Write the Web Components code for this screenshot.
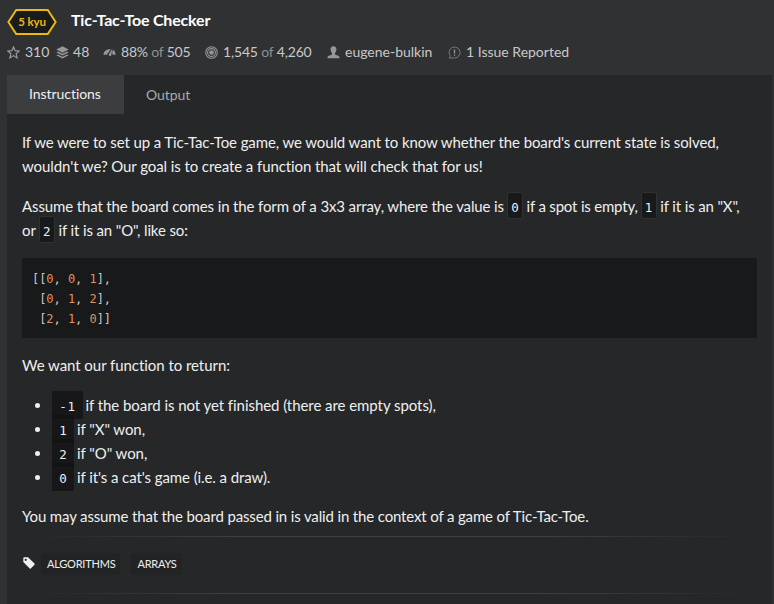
<!DOCTYPE html>
<html lang="en">
<head>
<meta charset="utf-8">
<title>Tic-Tac-Toe Checker</title>
<style>
html,body{margin:0;height:100%;background:#303133;overflow:hidden}
body{font-family:Lato,"Liberation Sans",sans-serif;color:#efefef;font-variant-ligatures:none}
</style>
</head>
<body>
<kata-page></kata-page>
<script>
const define = (name, html) => {
  const t = document.createElement('template');
  t.innerHTML = html;
  customElements.define(name, class extends HTMLElement {
    constructor() {
      super();
      this.attachShadow({mode: 'open'}).appendChild(t.content.cloneNode(true));
    }
  });
};

define('rank-badge', `<style>
:host{display:grid;width:50px;height:27px;font-size:11.5px;font-weight:700;color:#ecb613;letter-spacing:-.1px}
svg,span{grid-area:1/1}
span{place-self:center;line-height:27px}
</style>
<svg width="50" height="27" viewBox="0 0 50 27"><path d="M9.2 2H40.8L48.6 14 40.8 26H9.2L1.4 14Z" fill="#1a1c1b" stroke="#ecb613" stroke-width="2"/></svg><span><slot></slot></span>`);

define('kata-stat', `<style>
:host{display:flex;align-items:center;height:20px;font-size:14px;line-height:20px;color:#c8c8c8;white-space:pre}
::slotted(svg){flex:none;display:block;margin-right:5px}
::slotted(i){font-style:normal;color:#8f9091}
</style><slot name="icon"></slot><span><slot></slot></span>`);

define('kata-header', `<style>
:host{display:block;height:75px;box-sizing:border-box;padding:8px 0 0 7px}
.title{display:flex;height:27px}
h1{margin:0 0 0 14px;font-size:16px;line-height:24px;font-weight:700;color:#fff;letter-spacing:-.18px}
.stats{display:flex;margin-top:7px}
</style>
<div class="title"><rank-badge>5 kyu</rank-badge><h1>Tic-Tac-Toe Checker</h1></div>
<div class="stats">
<kata-stat style="width:49px"><svg slot="icon" width="13" height="13" viewBox="0 0 13 13"><path d="M6.5 .9L8.1 4.7 12.2 5 9.1 7.7 10.1 11.9 6.5 9.6 2.9 11.9 3.9 7.7 .8 5 4.9 4.7Z" fill="none" stroke="#999a9b" stroke-width="1.2"/></svg>310</kata-stat>
<kata-stat style="width:47px;letter-spacing:.1px"><svg slot="icon" style="margin-right:4px" width="13" height="13" viewBox="0 0 13 13" fill="#96979a"><path d="M6.5 .3L12.7 3.5 6.5 6.7 .3 3.5ZM1.9 5.5L6.5 7.8 11.1 5.5 12.7 6.4 6.5 9.5 .3 6.4ZM1.9 8.4L6.5 10.7 11.1 8.4 12.7 9.3 6.5 12.5 .3 9.3Z"/></svg>48</kata-stat>
<kata-stat style="width:102px;letter-spacing:-.2px"><svg slot="icon" width="13" height="13" viewBox="0 0 13 13" fill="#96979a"><path d="M.4 8.7Q1 3.2 7.6 3.1L6 6Q4.6 6.6 4.1 8.7ZM10.2 3.8Q12.4 5.1 12.7 8.7H9.7Q9.6 7.4 9 6.5Z"/><path d="M9.4 2.4L8.4 8.6A1.3 1.3 0 1 1 6.2 7.8Z"/></svg>88% <i>of</i> 505</kata-stat>
<kata-stat style="width:122px;letter-spacing:-.17px"><svg slot="icon" width="13" height="13" viewBox="0 0 13 13" fill="none" stroke="#96979a" stroke-width="1.1"><circle cx="6.5" cy="6.5" r="5.8"/><circle cx="6.5" cy="6.5" r="3.9"/><circle cx="6.5" cy="6.5" r="1.8" fill="#96979a"/></svg>1,545 <i>of</i> 4,260</kata-stat>
<kata-stat style="width:121px"><svg slot="icon" width="13" height="13" viewBox="0 0 13 13"><path d="M6.5 .3C8.6.3 9.6 1.7 9.4 3.8 9.3 5.3 8.6 6.5 8 7.1V8.6L11.7 10Q12.5 10.4 12.6 12.3H.4Q.5 10.4 1.3 10L5 8.6V7.1C4.4 6.5 3.7 5.3 3.6 3.8 3.4 1.7 4.4.3 6.5.3Z" fill="#96979a"/></svg>eugene-bulkin</kata-stat>
<kata-stat><svg slot="icon" width="13" height="13" viewBox="0 0 13 13"><path d="M1 12H6.5A5.5 5.5 0 1 0 2.4 10.1L1 12Z" fill="none" stroke="#7f8082" stroke-width=".9"/><path d="M6.5 3.5V7.4M6.5 8.4V9.8" stroke="#96979a" stroke-width="1.3"/></svg>1 Issue Reported</kata-stat>
</div>`);

define('kata-tab', `<style>
:host{display:block;box-sizing:border-box;height:39px;padding:1px 22px 0;font-size:14px;line-height:38px;color:#a9aaab;letter-spacing:-.05px}
:host([active]){width:117px;background:#3c3d3f;color:#efefef;padding-top:0}
</style><slot></slot>`);

define('code-chip', `<style>
:host{display:inline-block;box-sizing:border-box;width:16px;height:27px;margin:-2px 0 -1px -.7px;border:1px solid #303133;border-radius:3px;background:#18191a;font:12.5px/29px "DejaVu Sans Mono",monospace;letter-spacing:0;text-align:center;vertical-align:top}
:host([flat]){width:22px;height:28px;margin:-2px -.7px -2px 0;border:0;border-radius:0;line-height:31px;background:rgba(15,15,17,.65)}
:host([flat][wide]){width:31px;letter-spacing:.6px;margin-right:-1.3px}
</style><slot></slot>`);

define('code-block', `<style>
:host{display:block;box-sizing:border-box;height:80px;padding:11px 10px;background:#18191a;color:#c5c8c6}
div{font:12px/20px "DejaVu Sans Mono",monospace;letter-spacing:-.05px;white-space:pre}
b{font-weight:400;color:#de935f}
</style><div>[[<b>0</b>, <b>0</b>, <b>1</b>],</div><div> [<b>0</b>, <b>1</b>, <b>2</b>],</div><div> [<b>2</b>, <b>1</b>, <b>0</b>]]</div>`);

define('kata-description', `<style>
:host{display:block;padding:16px 15px 0;font-size:15px;line-height:24px}
p{margin:0 0 16px;white-space:nowrap}
li{height:24px;white-space:nowrap}
code-block{margin-bottom:15px}
ul{margin:0 0 15px;padding-left:30px}
</style>
<p><span style="letter-spacing:-.112px">If we were to set up a Tic-Tac-Toe game, we would want to know whether the board's current state is solved,</span><br><span style="letter-spacing:-.09px">wouldn't we? Our goal is to create a function that will check that for us!</span></p>
<p><span style="letter-spacing:-.13px">Assume that the board comes in the form of a 3x3 array, where the value is </span><code-chip>0</code-chip><span style="letter-spacing:-.19px"> if a spot is empty, </span><code-chip>1</code-chip><span style="letter-spacing:-.14px"> if it is an "X",</span><br>or <code-chip>2</code-chip><span style="letter-spacing:-.13px"> if it is an "O", like so:</span></p>
<code-block></code-block>
<p style="letter-spacing:-.05px">We want our function to return:</p>
<ul><li style="letter-spacing:-.06px"><code-chip flat wide>-1</code-chip> if the board is not yet finished (there are empty spots),</li><li style="letter-spacing:-.08px"><code-chip flat>1</code-chip> if "X" won,</li><li style="letter-spacing:-.08px"><code-chip flat>2</code-chip> if "O" won,</li><li style="letter-spacing:-.09px"><code-chip flat>0</code-chip> if it's a cat's game (i.e. a draw).</li></ul>
<p style="margin:0;letter-spacing:-.145px">You may assume that the board passed in is valid in the context of a game of Tic-Tac-Toe.</p>`);

define('fade-rule', `<style>:host{display:block;height:1px;background:linear-gradient(90deg,transparent 1%,#3f4042 30%,#3f4042 70%,transparent 99%)}</style>`);

define('tag-chip', `<style>
:host{display:block;box-sizing:border-box;height:22px;padding:0 5px 0 6px;border-radius:3px;background:#222324;font-size:11px;line-height:22px;letter-spacing:-.22px}
</style><slot></slot>`);

define('tag-list', `<style>
:host{display:flex;align-items:center;height:22px}
svg{margin:-2px 6px 0 1px}
tag-chip+tag-chip{margin-left:11px}
</style><svg width="12" height="12" viewBox="0 0 12 12"><path fill-rule="evenodd" d="M.3 1.2Q.3.3 1.2.3H5L11.5 6.6Q12 7.1 11.5 7.7L7.8 11.4Q7.2 11.9 6.7 11.4L.3 5ZM2.7 1.7A1.1 1.1 0 1 0 2.7 3.9 1.1 1.1 0 1 0 2.7 1.7Z" fill="#efefef"/></svg><tag-chip>ALGORITHMS</tag-chip><tag-chip>ARRAYS</tag-chip>`);

define('kata-page', `<style>
:host{display:block;height:604px;background:#303133}
main{height:529px;margin:0 2px 0 7px;background:#262729}
nav{display:flex}
fade-rule{margin:8px 15px 0}
tag-list{margin:16px 15px 0}
.last{margin-top:18px}
</style>
<kata-header></kata-header>
<main><nav><kata-tab active>Instructions</kata-tab><kata-tab>Output</kata-tab></nav>
<kata-description></kata-description>
<fade-rule></fade-rule><tag-list></tag-list><fade-rule class="last"></fade-rule></main>`);
</script>
</body>
</html>
